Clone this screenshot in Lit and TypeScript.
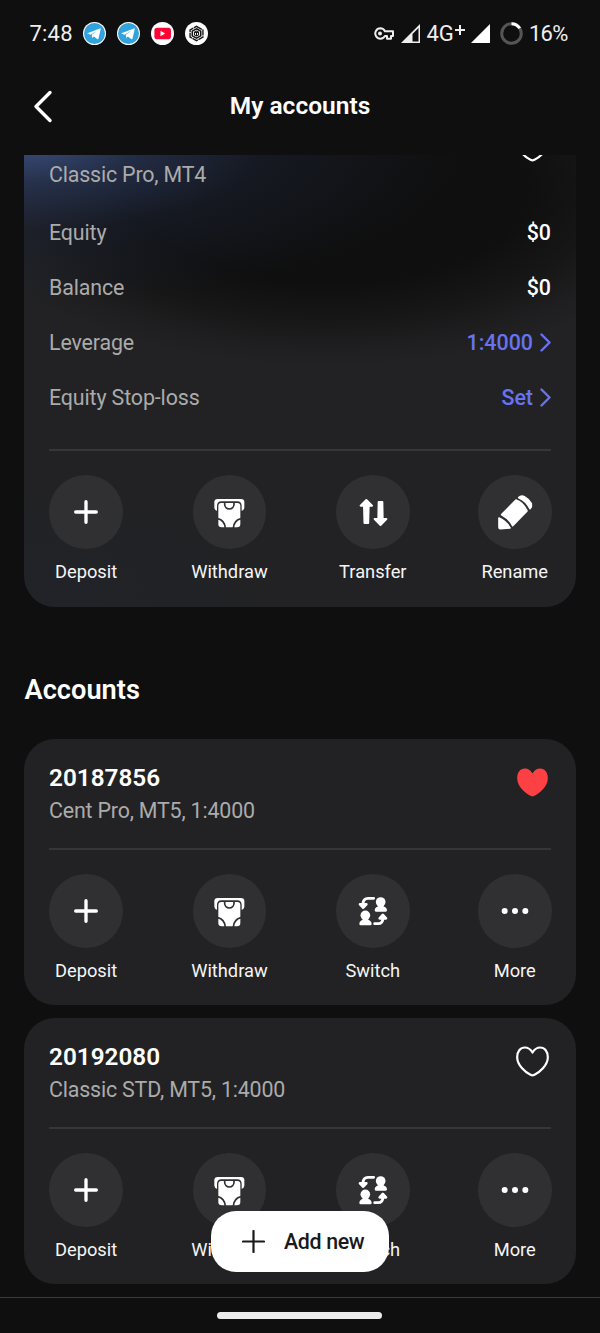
import { LitElement, html, svg, css, nothing } from "lit";
import { customElement, property } from "lit/decorators.js";

// Icon drawings share one grid: 3 units per CSS pixel, origin in the middle.
const icons: Record<string, unknown> = {
  plus: svg`<path d="M-31 0H31M0-31V31" stroke="#fff" stroke-width="10" stroke-linecap="round"/>`,
  withdraw: svg`
    <path d="M-44-29Q-44-39-34-39H36Q46-39 46-29V-13Q45-5 37-3H-35Q-43-5-44-13Z" fill="#fff"/>
    <path d="M-36-18Q-36-32-23-32H25Q38-32 38-18V42Q38 48 30 48H-28Q-36 48-36 42Z" fill="#303032"/>
    <path d="M-32-17Q-32-27-23-27H25Q34-27 34-17V36Q34 46 24 46H-22Q-32 46-32 36Z" fill="#fff"/>
    <path d="M-13-28V-23A14 14 0 0 0 15-23V-28M-34 20Q-13 25-11 48M36 20Q15 25 13 48" fill="none" stroke="#303032" stroke-width="5"/>`,
  transfer: svg`<g fill="#fff" stroke="#fff" stroke-width="6" stroke-linejoin="round">
    <path d="M-20-36L-37-19H-27L-25.500 33H-14.500L-13-19H-3Z"/>
    <path d="M22.500 39L5 21H16L17-30H28L29 21H40Z"/></g>`,
  rename: svg`<g fill="#fff" stroke="#fff" stroke-width="5" stroke-linejoin="round">
    <path d="M11-43Q19-51 29-45Q42-38 49-25Q51-16 45-10Q33-34 11-43Z"/>
    <path d="M3-36Q26-27 36-3L-7 41Q-18 19-40 8Z"/>
    <path d="M-48 18Q-26 28-15 48L-44 50Q-48 50-48 46Z"/></g>`,
  switch: svg`<g fill="#fff">
    <circle cx="23" cy="-27" r="14.500"/><path d="M16-18H30Q31-13 37-11Q42-8 42-2Q42 2 38 2H9Q5 2 5-2Q5-8 10-11Q16-13 16-18Z"/>
    <circle cx="-23" cy="13" r="14.500"/><path d="M-30 22H-16Q-15 27-9 29Q-4 32-4 39Q-4 43-8 43H-37Q-41 43-41 39Q-41 32-36 29Q-30 27-30 22Z"/></g>
    <path d="M2-38H-15Q-29-38-30-22M5 38H16Q29 38 30 22" fill="none" stroke="#fff" stroke-width="8.500" stroke-linecap="round"/>
    <path d="M-39-20H-20L-29.500-10ZM20 22H39L29.500 12Z" fill="#fff" stroke="#fff" stroke-width="8" stroke-linejoin="round"/>`,
  more: svg`<g fill="#fff"><circle cx="-31" r="9"/><circle r="9"/><circle cx="31" r="9"/></g>`,
};

const heartPath =
  "M0-27C-6-37-13-42-23-42C-37-42-46-30-46-13C-46 12-20 33-6 40Q0 43 6 40C20 33 46 12 46-13C46-30 37-42 23-42C13-42 6-37 0-27Z";

@customElement("heart-icon")
class HeartIcon extends LitElement {
  @property({ type: Boolean }) filled = false;
  static styles = css`
    :host { display: block; width: 37px; height: 37px; }
    svg { display: block; width: 100%; height: 100%; overflow: visible; }
  `;
  render() {
    return html`<svg viewBox="-55.500 -55.500 111 111">
      <path d=${heartPath} fill=${this.filled ? "#fd4043" : "none"} stroke=${this.filled ? "none" : "#fff"} stroke-width="6.600" stroke-linejoin="round"></path>
    </svg>`;
  }
}

@customElement("action-row")
class ActionRow extends LitElement {
  @property({ attribute: false }) items: [string, string][] = [];
  static styles = css`
    :host { display: flex; justify-content: space-between; margin: 0 -0.500px 0 0.300px; }
    .item { display: flex; flex-direction: column; align-items: center; color: #f5f5f5;
      font-size: 18.300px; line-height: 24px; letter-spacing: -0.020px; gap: 11px; }
    .disc { width: 73.500px; height: 73.500px; border-radius: 50%; background: #303032;
      display: flex; align-items: center; justify-content: center; }
    svg { width: 44px; height: 44px; display: block; }
  `;
  render() {
    return this.items.map(
      ([icon, label]) => html`<div class="item">
        <div class="disc"><svg viewBox="-66 -66 132 132">${icons[icon]}</svg></div>
        <span>${label}</span>
      </div>`
    );
  }
}

@customElement("account-card")
class AccountCard extends LitElement {
  @property() number = "";
  @property() subtitle = "";
  @property({ type: Boolean }) favorite = false;
  @property({ type: Boolean, reflect: true }) featured = false;
  @property({ attribute: false }) rows: [string, string, boolean][] = [];
  @property({ attribute: false }) actions: [string, string][] = [];
  static styles = css`
    :host { display: block; box-sizing: border-box; height: 266px; padding: 24px 25px 0;
      border-radius: 31px; background: #222224; }
    :host([featured]) { height: 504px;
      background:
        radial-gradient(ellipse 440px 160px at 0% 8%, rgba(60, 80, 130, 0.950) 0%, rgba(44, 59, 96, 0.680) 25%, rgba(30, 39, 60, 0.400) 55%, rgba(20, 24, 34, 0) 100%),
        radial-gradient(ellipse 260px 100px at 0% 96%, rgba(32, 36, 44, 0.500), rgba(34, 34, 36, 0)),
        radial-gradient(ellipse 365px 172px at 55% 17%, #0f0f0f 0%, #0f0f0f 55%, rgba(15, 15, 15, 0.600) 76%, rgba(15, 15, 15, 0.180) 92%, rgba(15, 15, 15, 0) 104%),
        #222224; }
    .head { display: flex; justify-content: space-between; align-items: flex-start; height: 85px; }
    .title { font-size: 24.300px; line-height: 30px; font-weight: 600; color: #fff; height: 33px; }
    .sub { font-size: 21.400px; line-height: 30px; color: #ababab; letter-spacing: -0.180px; }
    heart-icon { margin-top: 1.200px; }
    .rows { margin-top: -7px; height: 244.400px; font-size: 21.400px; color: #ababab; letter-spacing: -0.130px; }
    .row { display: flex; justify-content: space-between; align-items: center; height: 55px; }
    .value { font-weight: 500; color: #fff; display: flex; align-items: center; gap: 7px; letter-spacing: 0; }
    .link { color: #6773f0; }
    .chev { width: 11px; height: 19px; }
    .rule { height: 2px; background: #363638; margin-bottom: 24px; }
    :host([featured]) .rule { margin-bottom: 24.600px; }
  `;
  render() {
    return html`
      <div class="head">
        <div><div class="title">${this.number}</div><div class="sub">${this.subtitle}</div></div>
        <heart-icon ?filled=${this.favorite}></heart-icon>
      </div>
      ${this.rows.length
        ? html`<div class="rows">${this.rows.map(
            ([label, value, link]) => html`<div class="row"><span>${label}</span>
              <span class="value ${link ? "link" : ""}">${value}${link
                ? html`<svg class="chev" viewBox="0 0 11 19"><path d="M1.500 1.500L9.500 9.500L1.500 17.500" fill="none" stroke="#6773f0" stroke-width="2.400" stroke-linecap="round" stroke-linejoin="round"/></svg>`
                : nothing}</span></div>`
          )}</div>`
        : nothing}
      <div class="rule"></div>
      <action-row .items=${this.actions}></action-row>
    `;
  }
}

const telegram = html`<svg class="app" viewBox="-34 -34 68 68"><circle r="34" fill="#fff"/><circle r="31" fill="#31a3dd"/>
  <path d="M-21-1L16-15Q19-16 18-12L12 15Q11 18 8 16L-2 9L-7 13L-8 4L9-9L-12 4L-20 1Q-22 0-21-1Z" fill="#fff"/></svg>`;

@customElement("app-root")
class AppRoot extends LitElement {
  static styles = css`
    :host { display: flex; flex-direction: column; position: relative; width: 600px; height: 1333px;
      overflow: hidden; background: #0f0f0f; color: #fff; font-family: Roboto, sans-serif; }
    .status { display: flex; align-items: center; justify-content: space-between; height: 67px; flex: none;
      padding: 0 32.500px 0 29.500px; box-sizing: border-box; font-size: 22px; color: #eee; }
    .group { display: flex; align-items: center; }
    .time { margin-right: 10.700px; letter-spacing: 0.200px; }
    .app { width: 23px; height: 23px; margin-right: 10.800px; display: block; }
    .key { width: 20px; height: 13px; margin-right: 7px; }
    .sig { width: 19px; height: 19px; }
    .net { margin: 0 6px 0 7px; letter-spacing: -0.200px; display: flex; }
    .netplus { width: 10px; height: 10px; margin: 4px 0 0 1px; }
    .ring { width: 23px; height: 23px; margin: 0 6px 0 10.500px; }
    .pct { letter-spacing: -0.800px; }
    .header { display: grid; grid-template-columns: 60px 1fr 60px; align-items: center; height: 77px; flex: none; margin-bottom: 11px; }
    .back { width: 20px; height: 34px; margin-left: 33px; }
    .title { text-align: center; font-size: 24.500px; font-weight: 600; }
    .scroll { flex: none; height: 1142px; overflow: hidden; padding: 0 24px; display: flex; flex-direction: column; }
    account-card { flex: none; margin-bottom: 13px; }
    .hero { margin-top: -52.500px; margin-bottom: 67.500px; }
    .section { font-size: 27.200px; line-height: 32px; height: 65px; flex: none; font-weight: 600; margin: 0 0 0 0.500px; }
    .nav { flex: 1; border-top: 1.500px solid #3a3a3a; display: flex; justify-content: center; align-items: center; padding-right: 1px; }
    .pill { width: 165px; height: 6.500px; border-radius: 4px; background: #ebebeb; }
    .fab { position: absolute; left: 210.500px; top: 1211px; width: 178.500px; height: 61px; border-radius: 25px;
      border: 0; padding: 0 0 0 31px; background: #fff; color: #1a1a1a; display: flex; align-items: center; gap: 19.500px;
      font: 500 21.400px Roboto, sans-serif; letter-spacing: -0.350px; white-space: nowrap; }
    .fabplus { width: 23px; height: 23px; flex: none; }
  `;
  render() {
    const base: [string, string][] = [["plus", "Deposit"], ["withdraw", "Withdraw"]];
    const tail: [string, string][] = [["switch", "Switch"], ["more", "More"]];
    return html`
      <div class="status">
        <div class="group">
          <span class="time">7:48</span>
          ${telegram}${telegram}
          <svg class="app" viewBox="-34 -34 68 68"><circle r="34" fill="#fff"/><rect x="-24" y="-17" width="49" height="34" rx="8" fill="#ff0334"/><path d="M-6-8L8 0L-6 8Z" fill="#fff"/></svg>
          <svg class="app" viewBox="-34 -34 68 68"><circle r="34" fill="#fff"/><g fill="none" stroke="#151515" stroke-width="4">
            <path d="M0-21L19-10.500V10.500L0 21L-19 10.500V-10.500Z" stroke-dasharray="18 2"/><path d="M0-14L12.500-7V7L0 14L-12.500 7V-7Z" stroke-width="4.500"/>
            <path d="M-6-4L0-7L6-4V4L0 7L-6 4ZM-4-3H4M0-3V5" stroke-width="3"/></g></svg>
        </div>
        <div class="group">
          <svg class="key" viewBox="0 0 60 39"><path d="M19 4A15.500 15.500 0 1 0 33 27H39V35H51V27H57V13H33A15.500 15.500 0 0 0 19 4Z" fill="none" stroke="#eee" stroke-width="6" stroke-linejoin="round"/><circle cx="18" cy="19.500" r="6" fill="#eee"/></svg>
          <svg class="sig" viewBox="0 0 19 19"><path d="M0 19L19 0V19Z" fill="#eee"/><path d="M11.500 10V17.500H17.500V4Z" fill="#0f0f0f"/></svg>
          <span class="net">4G<svg class="netplus" viewBox="0 0 10 10"><path d="M0 5H10M5 0V10" stroke="#eee" stroke-width="2"/></svg></span>
          <svg class="sig" viewBox="0 0 19 19"><path d="M0 19L19 0V19Z" fill="#fff"/></svg>
          <svg class="ring" viewBox="-11.500 -11.500 23 23"><circle r="9.800" fill="none" stroke="#555" stroke-width="3"/><path d="M0-9.800A9.800 9.800 0 0 1 8.250-5.290" fill="none" stroke="#fff" stroke-width="3"/></svg>
          <span class="pct">16%</span>
        </div>
      </div>
      <div class="header">
        <svg class="back" viewBox="0 0 20 34"><path d="M17 3.500L3 17.500L17 31.500" fill="none" stroke="#fff" stroke-width="3.400" stroke-linecap="round" stroke-linejoin="round"/></svg>
        <span class="title">My accounts</span>
      </div>
      <div class="scroll">
        <account-card class="hero" featured subtitle="Classic Pro, MT4"
          .rows=${[["Equity", "$0", false], ["Balance", "$0", false], ["Leverage", "1:4000", true], ["Equity Stop-loss", "Set", true]]}
          .actions=${[...base, ["transfer", "Transfer"], ["rename", "Rename"]]}></account-card>
        <h2 class="section">Accounts</h2>
        <account-card number="20187856" subtitle="Cent Pro, MT5, 1:4000" favorite .actions=${[...base, ...tail]}></account-card>
        <account-card number="20192080" subtitle="Classic STD, MT5, 1:4000" .actions=${[...base, ...tail]}></account-card>
      </div>
      <div class="nav"><div class="pill"></div></div>
      <button class="fab">
        <svg class="fabplus" viewBox="0 0 23 23"><path d="M1 11.500H22M11.500 1V22" stroke="#1a1a1a" stroke-width="2.200" stroke-linecap="round"/></svg>
        Add new
      </button>
    `;
  }
}
